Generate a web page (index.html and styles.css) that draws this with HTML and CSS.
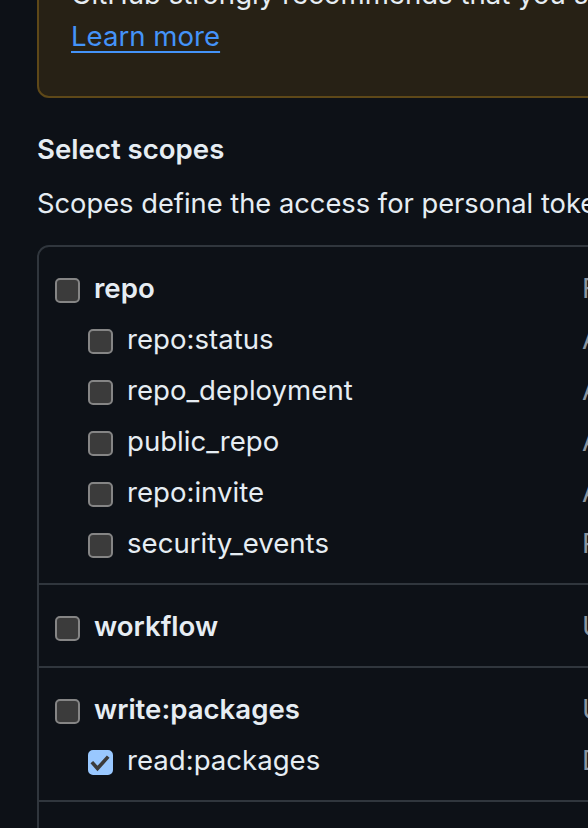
FILE: index.html
```
<!DOCTYPE html>
<html lang="en">
<head>
<meta charset="utf-8">
<title>New personal access token</title>
<link rel="stylesheet" href="styles.css">
</head>
<body>
<main class="page">
  <div class="flash">
    <div class="flash-line">GitHub strongly recommends that you set an expiration date for your token to help keep your information secure.</div>
    <a class="flash-link" href="#">Learn more</a>
  </div>

  <h3 class="label">Select scopes</h3>
  <p class="note">Scopes define the access for personal tokens. Read more about OAuth scopes.</p>

  <div class="scopes">
    <div class="group">
      <div class="row parent">
        <span class="name"><span class="cb"></span>repo</span>
        <span class="desc">Full control of private repositories</span>
      </div>
      <div class="row child">
        <span class="name"><span class="cb"></span>repo:status</span>
        <span class="desc">Access commit status</span>
      </div>
      <div class="row child">
        <span class="name"><span class="cb"></span>repo_deployment</span>
        <span class="desc">Access deployment status</span>
      </div>
      <div class="row child">
        <span class="name"><span class="cb"></span>public_repo</span>
        <span class="desc">Access public repositories</span>
      </div>
      <div class="row child">
        <span class="name"><span class="cb"></span>repo:invite</span>
        <span class="desc">Access repository invitations</span>
      </div>
      <div class="row child">
        <span class="name"><span class="cb"></span>security_events</span>
        <span class="desc">Read and write security events</span>
      </div>
    </div>

    <div class="group">
      <div class="row parent">
        <span class="name"><span class="cb"></span>workflow</span>
        <span class="desc">Update GitHub Action workflows</span>
      </div>
    </div>

    <div class="group">
      <div class="row parent">
        <span class="name"><span class="cb"></span>write:packages</span>
        <span class="desc">Upload packages to GitHub Package Registry</span>
      </div>
      <div class="row child">
        <span class="name"><span class="cb checked"><svg viewBox="0 0 25 25" width="25" height="25"><polyline points="5,13.5 9.5,18.5 19,8" fill="none" stroke="#3b3b3b" stroke-width="3.6" stroke-linecap="square" stroke-linejoin="miter"/></svg></span>read:packages</span>
        <span class="desc">Download packages from GitHub Package Registry</span>
      </div>
    </div>

    <div class="group">
      <div class="row parent">
        <span class="name"><span class="cb"></span>delete:packages</span>
        <span class="desc">Delete packages from GitHub Package Registry</span>
      </div>
    </div>
  </div>
</main>
</body>
</html>
```
FILE: styles.css
```
html, body {
  margin: 0;
  padding: 0;
  background: #0d1117;
  overflow: hidden;
}

body {
  font-family: Inter, "Liberation Sans", sans-serif;
  font-size: 27.6px;
  line-height: 42px;
  color: #e6edf3;
}

.page {
  width: 1400px;
  margin-top: -69px;
  padding-left: 37px;
}

.flash {
  background: #272115;
  border: 2px solid #5e4818;
  border-radius: 12px;
  padding: 40px 32px 39px;
}

.flash-line {
  white-space: nowrap;
}

.flash-link {
  color: #4493f8;
  text-decoration: underline;
  text-decoration-thickness: 2px;
  text-underline-offset: 5px;
}

.label {
  margin: 30px 0 0;
  font-size: 27.6px;
  line-height: 42px;
  font-weight: 600;
}

.note {
  margin: 13px 0 0;
  font-size: 27.3px;
  white-space: nowrap;
}

.scopes {
  margin-top: 20px;
  border: 2px solid #30363d;
  border-radius: 12px;
}

.group {
  padding: 15px 16px;
}

.group + .group {
  border-top: 2px solid #30363d;
}

.row {
  display: grid;
  grid-template-columns: 527px auto;
  height: 51px;
  align-items: center;
}

.name {
  display: flex;
  align-items: center;
  gap: 14px;
  white-space: nowrap;
}

.parent .name {
  font-weight: 600;
}

.child .name {
  padding-left: 33px;
}

.desc {
  color: #8d96a0;
  white-space: nowrap;
}

.cb {
  box-sizing: border-box;
  width: 25px;
  height: 25px;
  margin-top: 5px;
  flex: none;
  background: #3b3b3b;
  border: 2px solid #858585;
  border-radius: 5px;
  display: inline-flex;
}

.cb.checked {
  background: #99c8ff;
  border-color: #99c8ff;
  overflow: hidden;
}

.cb.checked svg {
  display: block;
  margin: -2px;
}
```
